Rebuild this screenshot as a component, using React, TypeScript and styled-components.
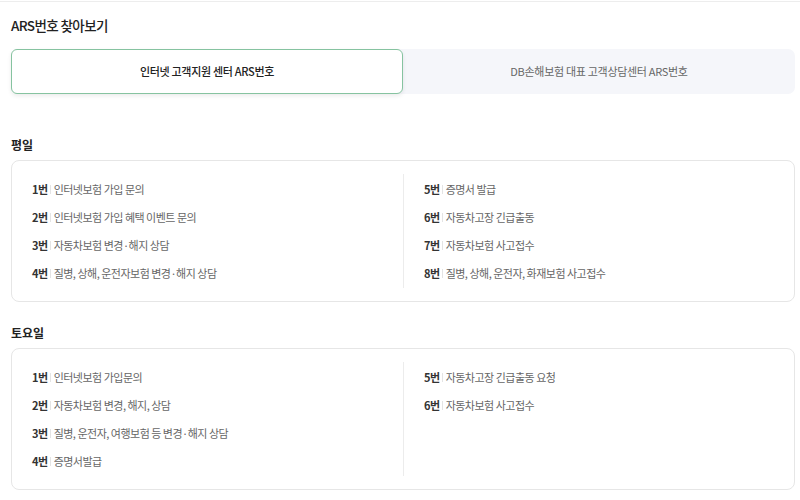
import styled, { createGlobalStyle } from "styled-components";

const GlobalStyle = createGlobalStyle`
  body {
    margin: 0;
    background: #fff;
    font-family: "Noto Sans CJK KR", "Noto Sans", sans-serif;
    color: #222;
  }
`;

const Page = styled.div`
  border-top: 1px solid #ededed;
  margin-top: 1px;
  padding: 12px 5px 0 11px;
`;

const Title = styled.h2`
  margin: 0;
  font-size: 13.5px;
  font-weight: 500;
  line-height: 22px;
  color: #222;
  letter-spacing: -0.6px;
`;

const Tabs = styled.div`
  margin-top: 13px;
  display: grid;
  grid-template-columns: 1fr 1fr;
  height: 45px;
  background: #f5f6fa;
  border-radius: 7px;
`;

const Tab = styled.button<{ $active?: boolean }>`
  border: 1px solid ${(p) => (p.$active ? "#86c3a0" : "transparent")};
  background: ${(p) => (p.$active ? "#fff" : "transparent")};
  border-radius: 6px;
  box-shadow: ${(p) => (p.$active ? "0 2px 4px rgba(0,0,0,0.08)" : "none")};
  font-family: inherit;
  font-size: 11px;
  font-weight: ${(p) => (p.$active ? 500 : 400)};
  color: ${(p) => (p.$active ? "#222" : "#666")};
  letter-spacing: -0.3px;
  cursor: pointer;
  padding: 0 0 2px;
`;

const SectionTitle = styled.h3<{ $top: number }>`
  margin: ${(p) => p.$top}px 0 0;
  font-size: 12px;
  font-weight: 700;
  line-height: 18px;
  color: #222;
`;

const Card = styled.div`
  margin-top: 6px;
  border: 1px solid #e6e6e6;
  border-radius: 8px;
  padding: 13px 0;
  display: grid;
  grid-template-columns: 1fr 1fr;
  height: 142px;
  box-sizing: border-box;
`;

const Column = styled.ul<{ $right?: boolean }>`
  list-style: none;
  margin: 0;
  padding: 5px 0 0 20px;
  border-left: ${(p) => (p.$right ? "1px solid #ececec" : "none")};
  display: flex;
  flex-direction: column;
  gap: 8px;
`;

const Item = styled.li`
  display: flex;
  align-items: center;
  height: 20px;
  font-size: 11px;
  line-height: 20px;
  letter-spacing: -0.5px;
`;

const Num = styled.span`
  font-weight: 700;
  color: #333;
  padding-right: 3px;
  margin-right: 3px;
  position: relative;
  &::after {
    content: "";
    position: absolute;
    right: 0;
    top: 6px;
    width: 1px;
    height: 9px;
    background: #e4e4e4;
  }
`;

const Desc = styled.span`
  color: #666;
`;

type Row = [string, string];

const weekday: Row[][] = [
  [
    ["1번", "인터넷보험 가입 문의"],
    ["2번", "인터넷보험 가입 혜택 이벤트 문의"],
    ["3번", "자동차보험 변경·해지 상담"],
    ["4번", "질병, 상해, 운전자보험 변경·해지 상담"],
  ],
  [
    ["5번", "증명서 발급"],
    ["6번", "자동차고장 긴급출동"],
    ["7번", "자동차보험 사고접수"],
    ["8번", "질병, 상해, 운전자, 화재보험 사고접수"],
  ],
];

const saturday: Row[][] = [
  [
    ["1번", "인터넷보험 가입문의"],
    ["2번", "자동차보험 변경, 해지, 상담"],
    ["3번", "질병, 운전자, 여행보험 등 변경·해지 상담"],
    ["4번", "증명서발급"],
  ],
  [
    ["5번", "자동차고장 긴급출동 요청"],
    ["6번", "자동차보험 사고접수"],
  ],
];

function Schedule({ cols }: { cols: Row[][] }) {
  return (
    <Card>
      {cols.map((rows, i) => (
        <Column key={i} $right={i === 1}>
          {rows.map(([n, d]) => (
            <Item key={n}>
              <Num>{n}</Num>
              <Desc>{d}</Desc>
            </Item>
          ))}
        </Column>
      ))}
    </Card>
  );
}

export default function App() {
  return (
    <>
      <GlobalStyle />
      <Page>
        <Title>ARS번호 찾아보기</Title>
        <Tabs>
          <Tab $active>인터넷 고객지원 센터 ARS번호</Tab>
          <Tab>DB손해보험 대표 고객상담센터 ARS번호</Tab>
        </Tabs>
        <SectionTitle $top={42}>평일</SectionTitle>
        <Schedule cols={weekday} />
        <SectionTitle $top={22}>토요일</SectionTitle>
        <Schedule cols={saturday} />
      </Page>
    </>
  );
}
